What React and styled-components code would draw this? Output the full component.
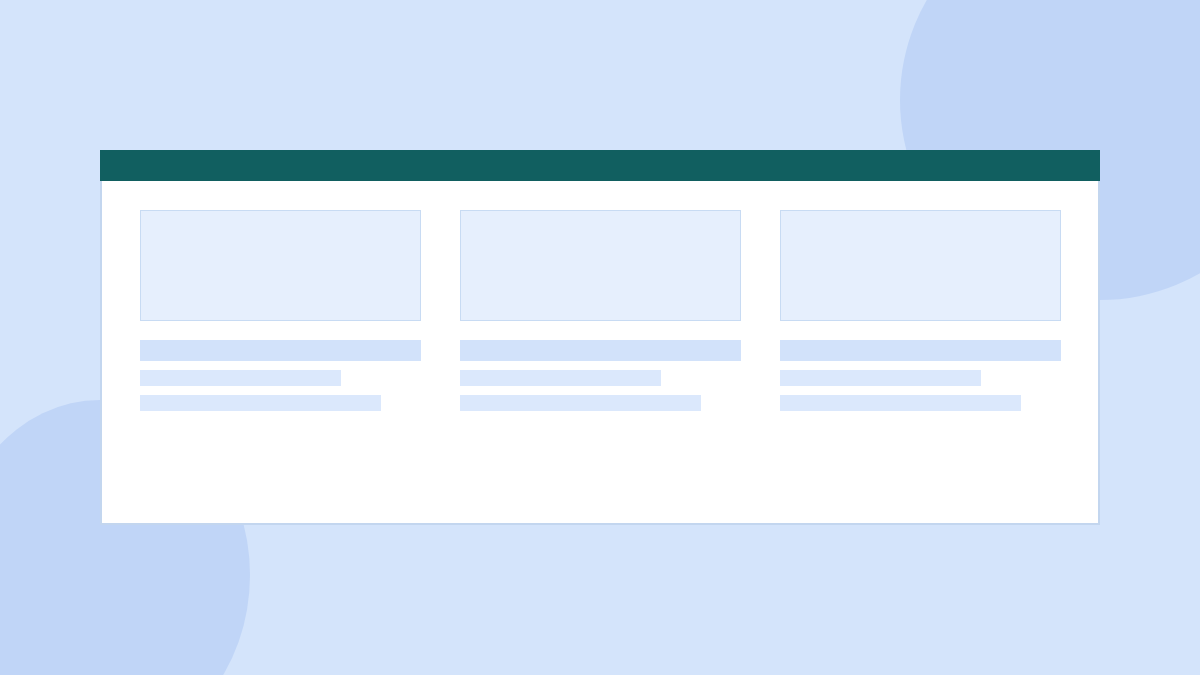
import React from "react";
import styled, { createGlobalStyle } from "styled-components";

const Global = createGlobalStyle`
  html, body { margin: 0; padding: 0; }
  body { font-family: "Liberation Sans", Arial, sans-serif; background: #d4e4fb; }
`;

const Page = styled.div`
  position: relative;
  width: 1200px;
  height: 675px;
  overflow: hidden;
  background: #d4e4fb;
  display: flex;
  align-items: flex-start;
  justify-content: center;
  padding-top: 150px;
  box-sizing: border-box;
`;

const Blob = styled.div`
  position: absolute;
  border-radius: 50%;
  background: #c0d5f7;
  width: ${(p) => p.$rx * 2}px;
  height: ${(p) => p.$ry * 2}px;
  left: ${(p) => p.$cx - p.$rx}px;
  top: ${(p) => p.$cy - p.$ry}px;
`;

const Frame = styled.div`
  position: relative;
  width: 1000px;
  height: 375px;
  box-sizing: border-box;
  background: #ffffff;
  border: 2px solid #c3d6ef;
  border-top: none;
  display: flex;
  flex-direction: column;
`;

const Header = styled.div`
  height: 31px;
  margin: 0 -2px;
  background: #115f60;
`;

const Cards = styled.div`
  display: grid;
  grid-template-columns: repeat(3, 281px);
  column-gap: 39px;
  padding: 29px 0 0 38px;
`;

const Card = styled.div`
  display: flex;
  flex-direction: column;
`;

const Thumb = styled.div`
  height: 111px;
  box-sizing: border-box;
  background: #e6effd;
  border: 1px solid #c8dbf3;
  margin-bottom: 19px;
`;

const Bar = styled.div`
  height: ${(p) => p.$h}px;
  width: ${(p) => p.$w}px;
  background: ${(p) => p.$c};
  margin-bottom: ${(p) => p.$mb}px;
`;

function CardItem() {
  return (
    <Card>
      <Thumb />
      <Bar $h={21} $w={281} $c="#d2e2fa" $mb={9} />
      <Bar $h={16} $w={201} $c="#dbe8fc" $mb={9} />
      <Bar $h={16} $w={241} $c="#dbe8fc" $mb={0} />
    </Card>
  );
}

export default function App() {
  return (
    <>
      <Global />
      <Page>
        <Blob $cx={1100} $cy={100} $rx={200} $ry={200} />
        <Blob $cx={100} $cy={575} $rx={150} $ry={175} />
        <Frame>
          <Header />
          <Cards>
            <CardItem />
            <CardItem />
            <CardItem />
          </Cards>
        </Frame>
      </Page>
    </>
  );
}
